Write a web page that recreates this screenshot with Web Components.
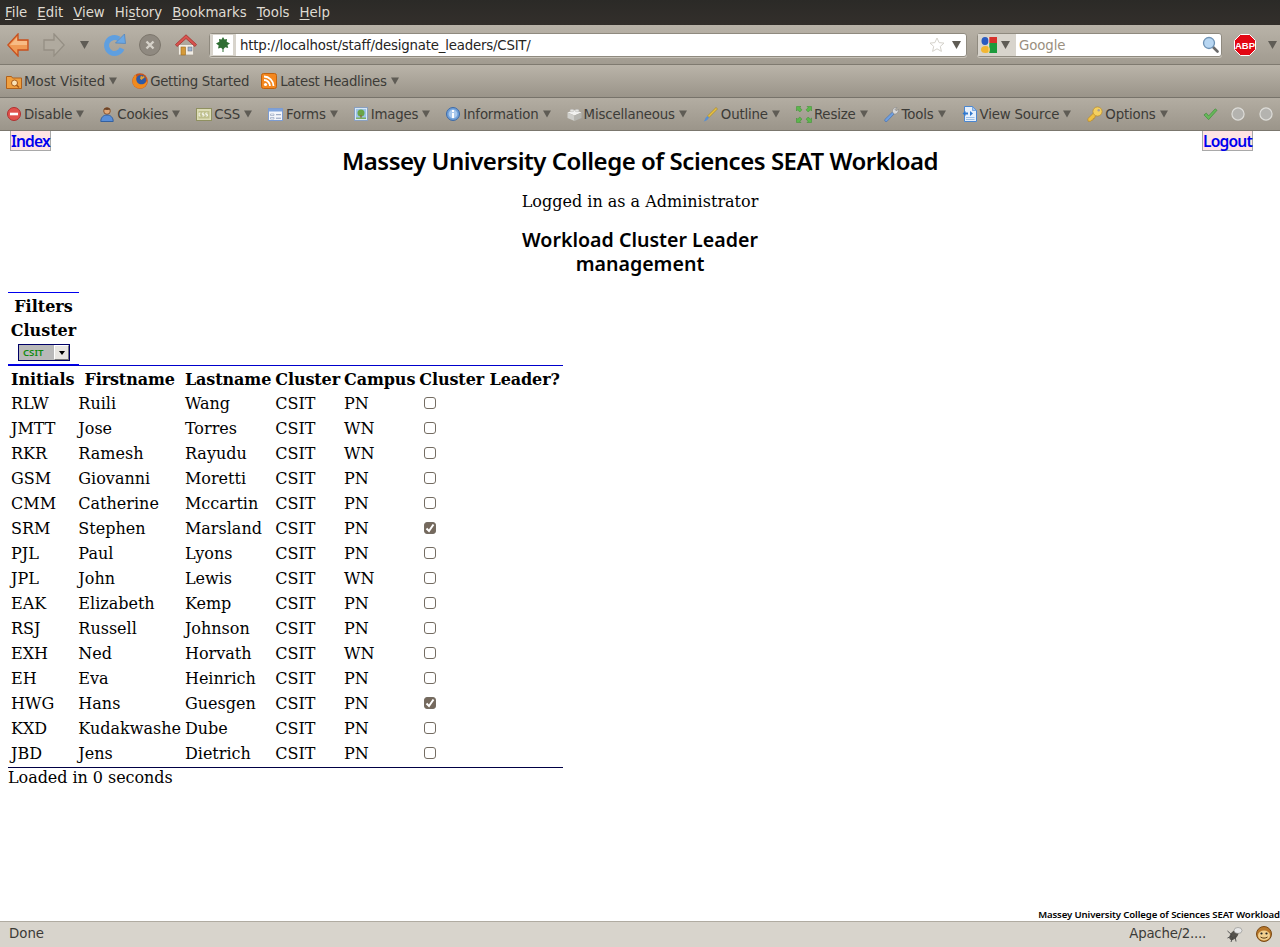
<!DOCTYPE html>
<html>
<head>
<meta charset="utf-8">
<title>Massey University College of Sciences SEAT Workload</title>
<style>
  html, body { margin: 0; height: 100%; }
  body { width: 1280px; height: 947px; overflow: hidden; display: flex; flex-direction: column; background: #fff; font-family: "DejaVu Sans", sans-serif; }
  seat-page { flex: 1; }
</style>
</head>
<body>
<menu-bar></menu-bar>
<nav-bar></nav-bar>
<bookmarks-bar>
  <bar-item label="Most Visited" arrow class="tight">
    <svg slot="icon" width="16" height="16" viewBox="0 0 16 16"><path d="M.5 3.500h5l1 1.500h9v10.500H.5z" fill="#f0a040" stroke="#b0601a"/><circle cx="8.500" cy="10" r="3" fill="#fbe3b8" stroke="#a85a18"/><path d="M10.500 12l2.500 2.500" stroke="#a85a18" stroke-width="1.500"/></svg>
  </bar-item>
  <bar-item label="Getting Started" class="narrow tight">
    <svg slot="icon" width="16" height="16" viewBox="0 0 16 16"><circle cx="8" cy="8" r="7.800" fill="#c9541a"/><circle cx="9" cy="7" r="5" fill="#2c5aa8"/><path d="M9 2.500l1.500 1.200L12 3l.5 2-1.500.5L9.500 7 8 5.500z" fill="#e8a030"/><path d="M1.500 4.500C2 3 3 2 4 1.500 3.800 2.500 4 3 4.500 3.500 4 5 4 7 5 9c1.500 2.500 5 3 7.500 1.500 1-.6 2-1.500 3-3.500 0 5-3.500 8.500-7.500 8.500C3 15.500.2 11 .5 8c0-1.500.5-2.500 1-3.500z" fill="#f08a1e"/></svg>
  </bar-item>
  <bar-item label="Latest Headlines" arrow class="snug">
    <svg slot="icon" width="16" height="16" viewBox="0 0 16 16"><rect x=".5" y=".5" width="15" height="15" rx="2" fill="#f4871f" stroke="#c0620f"/><circle cx="4.500" cy="11.500" r="1.600" fill="#fff"/><path d="M3 7a6 6 0 0 1 6 6M3 3.500A9.500 9.500 0 0 1 12.500 13" fill="none" stroke="#fff" stroke-width="1.800"/></svg>
  </bar-item>
</bookmarks-bar>
<dev-bar>
  <bar-item label="Disable" arrow>
    <svg slot="icon" width="14" height="14" viewBox="0 0 14 14"><circle cx="7" cy="7" r="6.500" fill="#e0524c" stroke="#b03030"/><rect x="3" y="5.700" width="8" height="2.600" fill="#fff"/></svg>
  </bar-item>
  <bar-item label="Cookies" arrow>
    <svg slot="icon" width="14" height="15" viewBox="0 0 14 15"><circle cx="7" cy="4" r="3.300" fill="#e0a878" stroke="#8a5530"/><path d="M3.500 2.500c1-2.200 6-2.200 7 0-2 .6-5 .6-7 0z" fill="#6b4226"/><path d="M.8 14.500c0-4 2.500-6.500 6.200-6.500s6.200 2.500 6.200 6.500z" fill="#5a8fd8" stroke="#34609f"/></svg>
  </bar-item>
  <bar-item label="CSS" arrow class="tight">
    <svg slot="icon" width="16" height="13" viewBox="0 0 16 13"><rect x=".5" y=".5" width="15" height="12" fill="#dcdcb4" stroke="#8f9060"/><rect x="2.500" y="3" width="11" height="7.500" fill="#bfc08c"/><path d="M4.500 5h-1.300v3h1.300M8 5H6.300v1.500H8V8H6.300M11.500 5H9.800v1.500h1.700V8H9.800" fill="none" stroke="#fff" stroke-width=".8"/></svg>
  </bar-item>
  <bar-item label="Forms" arrow>
    <svg slot="icon" width="15" height="13" viewBox="0 0 15 13"><rect x=".5" y=".5" width="14" height="12" fill="#f4f6fb" stroke="#7d9cd0"/><rect x="1" y="1" width="13" height="2.500" fill="#7da2dc"/><path d="M2.500 6h3.500v1.500H2.500zM2.500 9.500h3.500V11H2.500z" fill="#fff" stroke="#8a9ab8" stroke-width=".6"/><path d="M8 6.700h5M8 10.200h5" stroke="#8a9ab8"/></svg>
  </bar-item>
  <bar-item label="Images" arrow>
    <svg slot="icon" width="14" height="14" viewBox="0 0 14 14"><rect x=".5" y=".5" width="13" height="13" fill="#d8e8f8" stroke="#8aa0c0"/><rect x="2" y="2" width="10" height="10" fill="#9cc4e8"/><circle cx="7" cy="6" r="3.500" fill="#6aa548"/><rect x="6.300" y="8" width="1.400" height="3" fill="#8a6a3a"/><rect x="2" y="10.500" width="10" height="1.500" fill="#7fb060"/></svg>
  </bar-item>
  <bar-item label="Information" arrow>
    <svg slot="icon" width="14" height="14" viewBox="0 0 14 14"><circle cx="7" cy="7" r="6.500" fill="#6f9fd8" stroke="#3d6aa8"/><circle cx="7" cy="7" r="4.400" fill="#a9c8ec"/><rect x="6" y="3" width="2" height="2" fill="#fff"/><rect x="6" y="6" width="2" height="5" fill="#fff"/></svg>
  </bar-item>
  <bar-item label="Miscellaneous" arrow class="tight">
    <svg slot="icon" width="15" height="14" viewBox="0 0 15 14"><path d="M7.500 3L14.500 5.500 7.500 8.500.5 5.500z" fill="#f2f2f0"/><path d="M.5 5.500l7 3V14l-7-3z" fill="#cfcfcb"/><path d="M14.500 5.500l-7 3V14l7-3z" fill="#b5b5b0"/><ellipse cx="5" cy="3.500" rx="2" ry="1.300" fill="#e6e6e2" stroke="#aaa" stroke-width=".4"/><ellipse cx="10" cy="3.500" rx="2" ry="1.300" fill="#e6e6e2" stroke="#aaa" stroke-width=".4"/></svg>
  </bar-item>
  <bar-item label="Outline" arrow>
    <svg slot="icon" width="15" height="15" viewBox="0 0 15 15"><path d="M13 .5l1.500 1.500L6 10.500 4.500 9z" fill="#e8c040" stroke="#a08020" stroke-width=".6"/><path d="M4.500 9L6 10.500C5 13 3 14 .5 14.500c1-1 1.500-2 2-3.500z" fill="#5a8fd0"/></svg>
  </bar-item>
  <bar-item label="Resize" arrow class="tight">
    <svg slot="icon" width="16" height="17" viewBox="0 0 16 17" fill="#5cb84c" stroke="#3b8f30" stroke-width=".5"><path d="M.5.500h4.500L3.800 1.700 6 3.800 3.800 6 1.700 3.800.5 5z"/><path d="M15.500.500H11l1.200 1.200L10 3.800 12.200 6l2.100-2.200L15.500 5z"/><path d="M.5 16.500H5l-1.200-1.200L6 13.200 3.800 11l-2.100 2.200L.5 12z"/><path d="M15.500 16.500H11l1.200-1.200L10 13.200l2.200-2.200 2.100 2.200L15.500 12z"/></svg>
  </bar-item>
  <bar-item label="Tools" arrow>
    <svg slot="icon" width="15" height="15" viewBox="0 0 15 15"><path d="M8.500 5L.8 12.500a1.500 1.500 0 0 0 2 2L10 7z" fill="#6f9fe0" stroke="#3f6cad" stroke-width=".6"/><path d="M8.500 5c-.5-3 2-5 4.500-4.500L11 2.500l1.500 1.500 2-2c.5 3-2 5.500-4.500 5z" fill="#d8d8d8" stroke="#888" stroke-width=".6"/></svg>
  </bar-item>
  <bar-item label="View Source" arrow>
    <svg slot="icon" width="15" height="16" viewBox="0 0 15 16"><path d="M2.500.500h8l4 4v11h-12z" fill="#e6f0fc" stroke="#4a86d0"/><path d="M10.500.500v4h4z" fill="#a8c8f0" stroke="#4a86d0" stroke-width=".6"/><path d="M4 11.500h8.500M4 13.500h8.500" stroke="#9abfe8"/><path d="M.5 7.500L3.500 5v1.500H6v2H3.500V10zM11 7.500L8 5v5z" fill="#2f78cf"/></svg>
  </bar-item>
  <bar-item label="Options" arrow class="tight">
    <svg slot="icon" width="16" height="16" viewBox="0 0 16 16"><path d="M7 6.500L.8 12.700l.2 2.500 2.500.2 1-1.200 1.500-.2.200-1.500 1.500-.2.200-1.500L9.500 9z" fill="#f0c040" stroke="#b8892a" stroke-width=".7"/><circle cx="10.500" cy="5.500" r="4.600" fill="#f4d060" stroke="#b8892a" stroke-width=".7"/><circle cx="11.700" cy="4.200" r="1.200" fill="#a89f92"/></svg>
  </bar-item>
</dev-bar>
<seat-page></seat-page>
<status-bar></status-bar>

<script>
const caret = `<svg width="9" height="8" viewBox="0 0 9 8"><path d="M0 0h9L4.500 8z" fill="#5f5c55"/></svg>`;

class MenuBar extends HTMLElement {
    connectedCallback() {
        const items = [["F", "ile"], ["E", "dit"], ["V", "iew"], ["His", "tory"], ["B", "ookmarks"], ["T", "ools"], ["H", "elp"]];
        const html = items.map(([a, b]) => {
            if (a === "His") return `<span>Hi<u>s</u>tory</span>`;
            return `<span><u>${a}</u>${b}</span>`;
        }).join("");
        this.attachShadow({ mode: "open" }).innerHTML = `
        <style>
          :host { display: flex; height: 25px; box-sizing: border-box; padding-left: 5px; gap: 10px; align-items: center;
                  background: linear-gradient(#2b2a27, #332f2b); color: #dfdbd2; font: 13.33px/25px "DejaVu Sans", sans-serif; }
          u { text-underline-offset: 2px; }
        </style>${html}`;
    }
}

class NavBar extends HTMLElement {
    connectedCallback() {
        this.attachShadow({ mode: "open" }).innerHTML = `
        <style>
          :host { display: flex; align-items: center; height: 40px; box-sizing: border-box; padding: 0 3px 0 7px;
                  background: linear-gradient(#b9b3a8, #a19b90); border-bottom: 1px solid #7f7a70; font-family: "DejaVu Sans", sans-serif; }
          svg { flex: none; display: block; }
          .url, .search { display: flex; align-items: center; height: 24px; box-sizing: border-box; background: #fff;
                          border: 1px solid #8f8a7f; border-radius: 3px; box-shadow: 0 1px 0 #c8c3b9; }
          .url { flex: 1; margin-left: 12px; }
          .fav { width: 26px; height: 22px; background: #d8d4cc; display: flex; align-items: center; justify-content: center; }
          .fav span { display: flex; width: 20px; height: 20px; background: #fff; align-items: center; justify-content: center; }
          .addr { flex: 1; padding: 1px 0 0 4px; font-size: 13.33px; letter-spacing: -.2px; color: #26251f; }
          .search { width: 245px; margin-left: 10px; }
          .engine { display: flex; align-items: center; gap: 4px; width: 38px; height: 22px; padding-left: 3px; box-sizing: border-box; background: #d8d4cc; }
          .ph { flex: 1; padding: 1px 0 0 3px; font-size: 13.33px; letter-spacing: -.1px; color: #9a8f80; }
        </style>
        <svg width="22" height="24" viewBox="0 0 22 24"><path d="M11 1L.8 12 11 23v-6h10V7H11z" fill="#f09a55" stroke="#c8501e" stroke-width="1.300"/><path d="M10 4.500L3 12h17V8H10z" fill="#f7bb85"/></svg>
        <svg style="margin-left:14px" width="22" height="24" viewBox="0 0 22 24"><path d="M11 1l10.200 11L11 23v-6H1V7h10z" fill="#b0aa9f" stroke="#958f84" stroke-width="1.300"/></svg>
        <span style="margin-left:15px;display:flex">${caret}</span>
        <svg style="margin-left:15px" width="22" height="22" viewBox="0 0 22 22"><path d="M18 14.500A8 8 0 1 1 15 4.800" fill="none" stroke="#5f9fe0" stroke-width="5"/><path d="M11.500 9L21.500 9.500 20.500 0z" fill="#6ba7e3" stroke="#3f7cc0" stroke-width=".6"/></svg>
        <svg style="margin-left:13px" width="22" height="22" viewBox="0 0 22 22"><circle cx="11" cy="11" r="10.500" fill="#8f8980" stroke="#7c766c"/><path d="M7.500 7.500l7 7M14.500 7.500l-7 7" stroke="#d5d1c9" stroke-width="2.400"/></svg>
        <svg style="margin-left:14px" width="22" height="22" viewBox="0 0 22 22"><path d="M3.500 10.500h15V21h-15z" fill="#f0ece4" stroke="#a09a8c" stroke-width=".7"/><path d="M11 .8L.5 10.500l1.500 2L11 4.500l9 8 1.500-2z" fill="#d9534f" stroke="#a5312c" stroke-width=".8"/><rect x="6" y="13" width="4.500" height="8" fill="#d49a3a" stroke="#9a6a1c" stroke-width=".6"/><rect x="13" y="13" width="4" height="4" fill="#9ab4cf" stroke="#667" stroke-width=".5"/></svg>
        <div class="url">
          <div class="fav"><span><svg width="14" height="15" viewBox="0 0 14 15"><path d="M7 0l1.500 2.500L11 2l-.3 2.800L14 6.500l-2.500 1.500.7 3-3-.7L7 12.500 5 10.800l-3 .7.700-3L0 6.500l3.300-1.700L3 2l2.500.5z" fill="#2f6e33"/><rect x="6.500" y="11" width="1" height="4" fill="#2f6e33"/></svg></span></div>
          <div class="addr">http://localhost/staff/designate_leaders/CSIT/</div>
          <svg width="16" height="16" viewBox="0 0 16 16"><path d="M8 1l2.100 4.600 4.900.5-3.700 3.300 1.100 5L8 11.800l-4.400 2.600 1.100-5L1 6.100l4.900-.5z" fill="#fff" stroke="#d5d2cb"/></svg>
          <span style="margin:0 5px 0 7px;display:flex">${caret}</span>
        </div>
        <div class="search">
          <div class="engine"><svg width="16" height="16" viewBox="0 0 16 16"><rect x="8" width="8" height="8" fill="#d6322c"/><rect x="8" y="6" width="8" height="10" fill="#1b9a3c"/><ellipse cx="4" cy="4" rx="3.500" ry="4" fill="#2a5bc0"/><ellipse cx="4.500" cy="12.500" rx="4.500" ry="3.500" fill="#f2b632"/><rect x="7.500" y="0" width="1" height="16" fill="#fff" opacity=".5"/></svg>${caret}</div>
          <div class="ph">Google</div>
          <svg style="margin-right:2px" width="17" height="17" viewBox="0 0 17 17"><path d="M10.500 10.500l5 5" stroke="#6a6a6a" stroke-width="2.600" stroke-linecap="round"/><circle cx="7" cy="7" r="5.500" fill="#b7d6f2" stroke="#6f93b5" stroke-width="1.300"/></svg>
        </div>
        <svg style="margin-left:12px" width="22" height="22" viewBox="0 0 22 22"><path d="M6.500.5h9l6 6v9l-6 6h-9l-6-6v-9z" fill="#e30613" stroke="#fff"/><text x="11" y="14.600" text-anchor="middle" font-family="Liberation Sans" font-weight="700" font-size="9.500" fill="#fff">ABP</text></svg>
        <span style="margin-left:12px;display:flex">${caret}</span>`;
    }
}

class BarItem extends HTMLElement {
    connectedCallback() {
        const label = this.getAttribute("label");
        this.attachShadow({ mode: "open" }).innerHTML = `
        <style>
          :host { display: inline-flex; align-items: center; color: #3c3b37; font: 13.33px "DejaVu Sans", sans-serif; white-space: nowrap; }
          .lb { margin-left: 3px; }
          .ar { display: flex; margin-left: 4px; }
          .ar svg { width: 8px; height: 8px; }
          :host(.tight) .lb { margin-left: 2px; }
          :host(.narrow) { letter-spacing: -.27px; margin-right: -3px; }
          :host(.snug) { letter-spacing: -.3px; }
        </style>
        <slot name="icon"></slot><span class="lb">${label}</span>${this.hasAttribute("arrow") ? `<span class="ar">${caret}</span>` : ""}`;
    }
}

class BookmarksBar extends HTMLElement {
    connectedCallback() {
        this.attachShadow({ mode: "open" }).innerHTML = `
        <style>
          :host { display: flex; align-items: center; height: 33px; box-sizing: border-box; padding-left: 6px; gap: 15px;
                  background: linear-gradient(#bab4a9, #9a9489); border-bottom: 1px solid #77736a; }
        </style><slot></slot>`;
    }
}

class DevBar extends HTMLElement {
    connectedCallback() {
        this.attachShadow({ mode: "open" }).innerHTML = `
        <style>
          :host { display: flex; align-items: center; height: 33px; box-sizing: border-box; padding: 0 7px; gap: 16px; letter-spacing: -.17px;
                  background: linear-gradient(#b3ada2, #9b958a); border-bottom: 1px solid #7b776e; }
          .right { margin-left: auto; display: flex; align-items: center; gap: 14px; }
          .right svg:first-child { margin-right: -1px; }
          svg { display: block; }
        </style>
        <slot></slot>
        <div class="right">
          <svg width="15" height="14" viewBox="0 0 16 14"><path d="M1 8l2.500-2 2.500 3L13 1.500l2 1.500-9 10z" fill="#67b85a" stroke="#3f8c3a" stroke-width=".7"/></svg>
          <svg width="14" height="14" viewBox="0 0 15 15"><circle cx="7.500" cy="7.500" r="6.500" fill="#b4b3af" stroke="#dddcd8" stroke-width="1.300"/></svg>
          <svg width="14" height="14" viewBox="0 0 15 15"><circle cx="7.500" cy="7.500" r="6.500" fill="#b4b3af" stroke="#dddcd8" stroke-width="1.300"/></svg>
        </div>`;
    }
}

class PageLink extends HTMLElement {
    connectedCallback() {
        this.attachShadow({ mode: "open" }).innerHTML = `
        <style>
          :host { display: block; height: 20px; box-sizing: border-box; border: 1px solid #a9a9a9; border-top: 0; background: #ffe4e4; }
          a { display: block; color: #0000ee; font: 600 15.6px/20px "Noto Sans", sans-serif; letter-spacing: -.8px; text-decoration: none; }
        </style><a href="#"><slot></slot></a>`;
    }
}

class ClusterSelect extends HTMLElement {
    connectedCallback() {
        this.attachShadow({ mode: "open" }).innerHTML = `
        <style>
          :host { display: flex; width: 52px; height: 17px; box-sizing: border-box; border: 1px solid #000066; background: #b9b9b9; }
          .v { flex: 1; color: #108a10; font: 600 9.6px/15px "Noto Sans", sans-serif; padding-left: 4px; }
          .b { width: 15px; box-sizing: border-box; background: #e8e6e2; border: 1px solid #fff; border-right-color: #777; border-bottom-color: #777; display: flex; align-items: center; justify-content: center; }
          .b i { border: 3.500px solid transparent; border-top: 4px solid #000; border-bottom: 0; }
        </style><div class="v">CSIT</div><div class="b"><i></i></div>`;
    }
}

class LeaderCheck extends HTMLElement {
    connectedCallback() {
        const on = this.hasAttribute("checked");
        this.attachShadow({ mode: "open" }).innerHTML = `
        <style>
          :host { display: block; width: 12px; height: 12px; margin: -1px 0 1px 5px; box-sizing: border-box; border: 1px solid #746c62; border-radius: 3px; background: ${on ? "#75695d" : "#fff"}; }
          svg { display: block; }
        </style>
        ${on ? `<svg width="10" height="10" viewBox="0 0 10 10"><path d="M1.500 5.500L4 8l4.500-6.500" fill="none" stroke="#fff" stroke-width="2"/></svg>` : ""}`;
    }
}

const STAFF = [
    ["RLW", "Ruili", "Wang", "CSIT", "PN", 0],
    ["JMTT", "Jose", "Torres", "CSIT", "WN", 0],
    ["RKR", "Ramesh", "Rayudu", "CSIT", "WN", 0],
    ["GSM", "Giovanni", "Moretti", "CSIT", "PN", 0],
    ["CMM", "Catherine", "Mccartin", "CSIT", "PN", 0],
    ["SRM", "Stephen", "Marsland", "CSIT", "PN", 1],
    ["PJL", "Paul", "Lyons", "CSIT", "PN", 0],
    ["JPL", "John", "Lewis", "CSIT", "WN", 0],
    ["EAK", "Elizabeth", "Kemp", "CSIT", "PN", 0],
    ["RSJ", "Russell", "Johnson", "CSIT", "PN", 0],
    ["EXH", "Ned", "Horvath", "CSIT", "WN", 0],
    ["EH", "Eva", "Heinrich", "CSIT", "PN", 0],
    ["HWG", "Hans", "Guesgen", "CSIT", "PN", 1],
    ["KXD", "Kudakwashe", "Dube", "CSIT", "PN", 0],
    ["JBD", "Jens", "Dietrich", "CSIT", "PN", 0],
];

class StaffTable extends HTMLElement {
    connectedCallback() {
        const rows = STAFF.map(r => `<tr>${r.slice(0, 5).map(c => `<td>${c}</td>`).join("")}
            <td><leader-check ${r[5] ? "checked" : ""}></leader-check></td></tr>`).join("");
        this.attachShadow({ mode: "open" }).innerHTML = `
        <style>
          :host { display: block; width: max-content; }
          table { border-top: 1px solid #0000cc; border-bottom: 1px solid #000044; border-spacing: 2px; font: 16px/21px "DejaVu Serif", serif; }
          th, td { padding: 1px; white-space: nowrap; text-align: left; }
          th { text-align: center; padding-bottom: 0; letter-spacing: -.1px; }
          tr { height: 23px; }
          tr:first-child { height: 22px; }
        </style>
        <table>
          <tr><th>Initials</th><th>Firstname</th><th>Lastname</th><th>Cluster</th><th>Campus</th><th>Cluster Leader?</th></tr>
          ${rows}
        </table>`;
    }
}

class FilterBox extends HTMLElement {
    connectedCallback() {
        this.attachShadow({ mode: "open" }).innerHTML = `
        <style>
          :host { display: flex; flex-direction: column; align-items: center; width: 71px; height: 73px; box-sizing: border-box;
                  border-top: 1px solid #0000ee; border-bottom: 1px solid #0000ee; font: bold 16px/24px "DejaVu Serif", serif; }
          div { height: 24px; }
          cluster-select { margin: 1px 0 0 1px; }
        </style>
        <div style="margin-top:2px">Filters</div><div>Cluster</div><cluster-select></cluster-select>`;
    }
}

class SeatPage extends HTMLElement {
    connectedCallback() {
        this.attachShadow({ mode: "open" }).innerHTML = `
        <style>
          :host { display: flex; flex-direction: column; background: #fff; color: #000; overflow: hidden; }
          header { display: grid; grid-template-columns: 1fr auto 1fr; padding: 0 10px; }
          header page-link { justify-self: start; }
          header page-link:last-child { justify-self: end; margin-right: 17px; }
          h1 { margin: 16px 0 0; font: 600 24px/28px "Noto Sans", sans-serif; letter-spacing: -.47px; white-space: nowrap; }
          .who { text-align: center; font: 16px/21px "DejaVu Serif", serif; margin-top: 16px; }
          h2 { margin: 16px auto 0; width: 240px; text-align: center; font: 600 19.600px/24px "Noto Sans", sans-serif; }
          .main { padding: 16px 0 0 8px; }
          .loaded { font: 16px/19px "DejaVu Serif", serif; letter-spacing: -.05px; }
          footer { margin-top: auto; text-align: right; font: 600 9.6px/12px "Noto Sans", sans-serif; letter-spacing: -.12px; white-space: nowrap; }
        </style>
        <header>
          <page-link>Index</page-link>
          <h1>Massey University College of Sciences SEAT Workload</h1>
          <page-link>Logout</page-link>
        </header>
        <div class="who">Logged in as a Administrator</div>
        <h2>Workload Cluster Leader management</h2>
        <div class="main">
          <filter-box></filter-box>
          <staff-table></staff-table>
          <div class="loaded">Loaded in 0 seconds</div>
        </div>
        <footer>Massey University College of Sciences SEAT Workload</footer>`;
    }
}

class StatusBar extends HTMLElement {
    connectedCallback() {
        this.attachShadow({ mode: "open" }).innerHTML = `
        <style>
          :host { display: flex; align-items: center; height: 26px; box-sizing: border-box; padding: 0 8px 2px 9px; border-top: 1px solid #b0aba1;
                  background: #d8d4cc; color: #3c3b37; font: 13.33px "DejaVu Sans", sans-serif; }
          .srv { margin-left: auto; letter-spacing: -.25px; }
          svg { display: block; }
        </style>
        <span>Done</span>
        <span class="srv">Apache/2....</span>
        <svg style="margin-left:21px" width="16" height="16" viewBox="0 0 16 16"><ellipse cx="7" cy="9" rx="3.500" ry="6" fill="#55524c" transform="rotate(40 7 9)"/><ellipse cx="11" cy="4.500" rx="4" ry="3" fill="#e8e8e8" stroke="#777" stroke-width=".5"/><path d="M.5 5l4.500 4M.5 12L5 10M4 16l2-5M9 15.500L8 10" stroke="#444" stroke-width=".9"/></svg>
        <svg style="margin-left:13px" width="16" height="16" viewBox="0 0 16 16"><circle cx="8" cy="8" r="7.500" fill="#b8772a" stroke="#7a4a15"/><ellipse cx="8" cy="9.500" rx="6" ry="5" fill="#f0cf8e"/><circle cx="5.500" cy="7.500" r="1.100" fill="#222"/><circle cx="10.500" cy="7.500" r="1.100" fill="#222"/><path d="M4.500 11c2 1.500 5 1.500 7 0" fill="none" stroke="#5a3a10"/></svg>`;
    }
}

customElements.define("menu-bar", MenuBar);
customElements.define("nav-bar", NavBar);
customElements.define("bar-item", BarItem);
customElements.define("bookmarks-bar", BookmarksBar);
customElements.define("dev-bar", DevBar);
customElements.define("page-link", PageLink);
customElements.define("cluster-select", ClusterSelect);
customElements.define("leader-check", LeaderCheck);
customElements.define("staff-table", StaffTable);
customElements.define("filter-box", FilterBox);
customElements.define("seat-page", SeatPage);
customElements.define("status-bar", StatusBar);
</script>
</body>
</html>
